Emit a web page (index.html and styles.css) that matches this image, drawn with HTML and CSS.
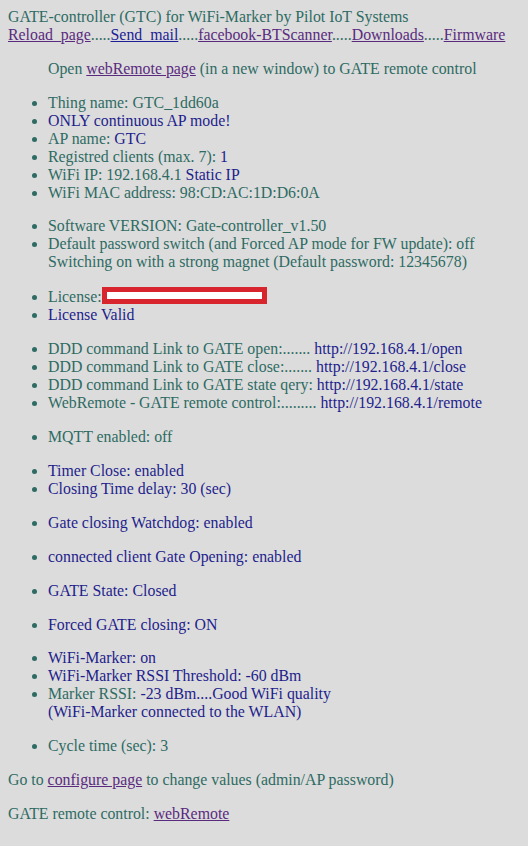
FILE: index.html
```html
<!DOCTYPE html>
<html>
<head>
<meta charset="utf-8">
<link rel="stylesheet" href="styles.css">
<title>GTC</title>
</head>
<body>
<div class="head">GATE-controller (GTC) for WiFi-Marker by Pilot IoT Systems</div>
<div class="nav"><a class="v" href="#">Reload_page</a>.....<a class="n" href="#">Send_mail</a>.....<a class="v" href="#">facebook-BTScanner</a>.....<a class="v" href="#">Downloads</a>.....<a class="v" href="#">Firmware</a></div>
<blockquote class="open">Open <a class="v" href="#">webRemote page</a> (in a new window) to GATE remote control</blockquote>
<ul class="grp">
<li>Thing name: GTC_1dd60a</li>
<li><span class="b">ONLY continuous AP mode!</span></li>
<li>AP name: <span class="b">GTC</span></li>
<li>Registred clients (max. 7): <span class="b">1</span></li>
<li>WiFi IP: 192.168.4.1 <span class="b">Static IP</span></li>
<li>WiFi MAC address: 98:CD:AC:1D:D6:0A</li>
</ul>
<ul class="grp">
<li>Software VERSION: Gate-controller_v1.50</li>
<li>Default password switch (and Forced AP mode for FW update): off<br>Switching on with a strong magnet (Default password: 12345678)</li>
</ul>
<ul class="grp">
<li>License:<span class="redact"></span></li>
<li><span class="b">License Valid</span></li>
</ul>
<ul class="grp">
<li>DDD command Link to GATE open:....... <span class="b">http://192.168.4.1/open</span></li>
<li>DDD command Link to GATE close:....... <span class="b">http://192.168.4.1/close</span></li>
<li>DDD command Link to GATE state qery: <span class="b">http://192.168.4.1/state</span></li>
<li>WebRemote - GATE remote control:......... <span class="b">http://192.168.4.1/remote</span></li>
</ul>
<ul class="grp">
<li>MQTT enabled: off</li>
</ul>
<ul class="grp">
<li><span class="b">Timer Close: enabled</span></li>
<li><span class="b">Closing Time delay: 30 (sec)</span></li>
</ul>
<ul class="grp">
<li><span class="b">Gate closing Watchdog: enabled</span></li>
</ul>
<ul class="grp">
<li><span class="b">connected client Gate Opening: enabled</span></li>
</ul>
<ul class="grp">
<li><span class="b">GATE State: Closed</span></li>
</ul>
<ul class="grp">
<li><span class="b">Forced GATE closing: ON</span></li>
</ul>
<ul class="grp">
<li><span class="b">WiFi-Marker: on</span></li>
<li><span class="b">WiFi-Marker RSSI Threshold: -60 dBm</span></li>
<li>Marker RSSI: <span class="b">-23 dBm....Good WiFi quality<br>(WiFi-Marker connected to the WLAN)</span></li>
</ul>
<ul class="grp">
<li>Cycle time (sec): 3</li>
</ul>
<p class="foot">Go to <a class="v" href="#">configure page</a> to change values (admin/AP password)</p>
<p class="foot">GATE remote control: <a class="v" href="#">webRemote</a></p>
</body>
</html>
```
FILE: styles.css
```css
html {
  background: #dcdcdc;
}
body {
  margin: 8px;
  background: #dcdcdc;
  color: #2e6b63;
  font-family: "Liberation Serif", "Times New Roman", serif;
  font-size: 15.85px;
  line-height: 17.93px;
}
a.v {
  color: #5a2a7e;
  text-decoration: underline;
}
a.n {
  color: #1e1e96;
  text-decoration: underline;
}
.b {
  color: #1e1e8c;
}
.open {
  margin: 16px 0 16px 40px;
}
.grp {
  margin: 16px 0;
  padding-left: 40px;
}
.redact {
  display: inline-block;
  box-sizing: border-box;
  width: 165px;
  height: 17px;
  border: 5px solid #d8242c;
  background: #ffffff;
  vertical-align: -2px;
  margin-left: 0;
}
.foot {
  margin: 16px 0;
}
```
